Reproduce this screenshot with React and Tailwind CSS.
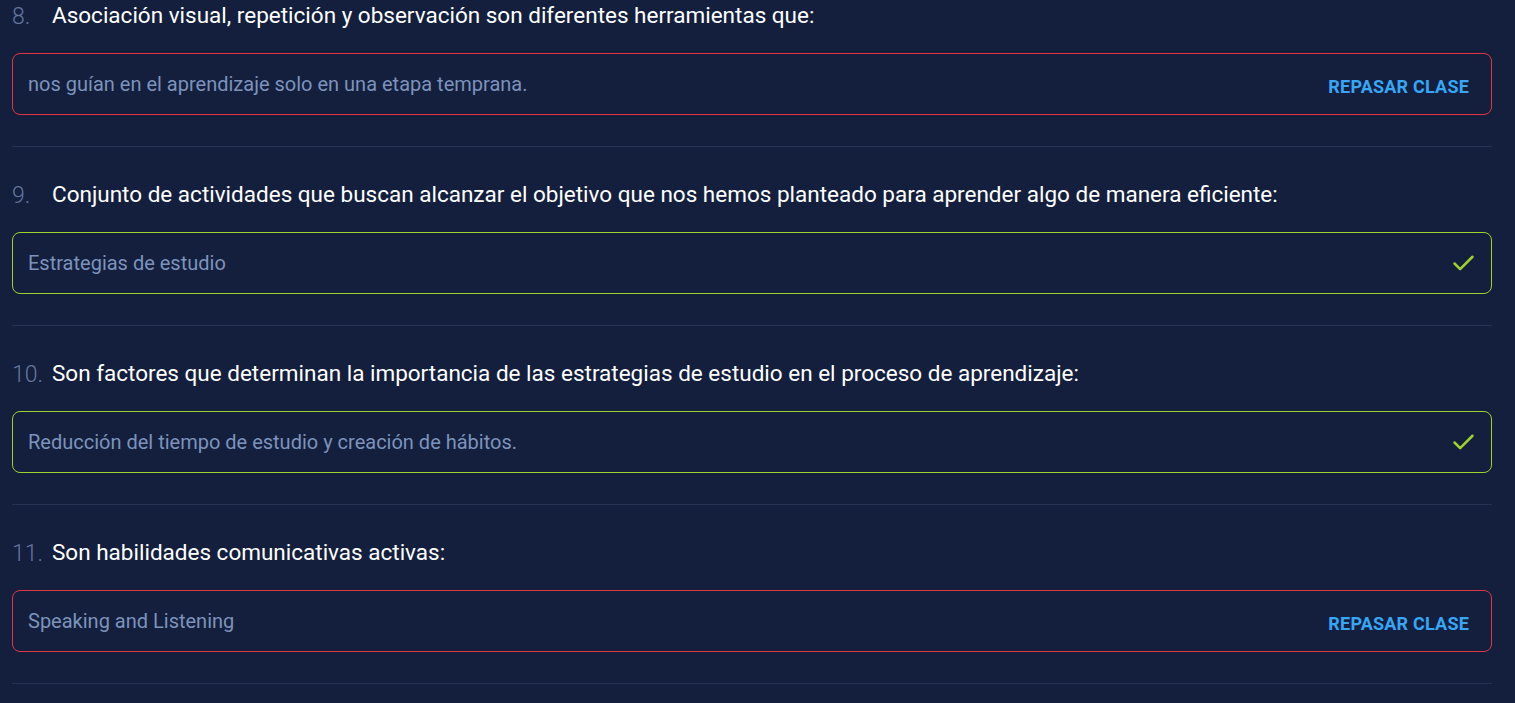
import { Check } from 'lucide-react'

const items = [
  {
    n: 8,
    q: 'Asociación visual, repetición y observación son diferentes herramientas que:',
    a: 'nos guían en el aprendizaje solo en una etapa temprana.',
    ok: false,
  },
  {
    n: 9,
    q: 'Conjunto de actividades que buscan alcanzar el objetivo que nos hemos planteado para aprender algo de manera eficiente:',
    a: 'Estrategias de estudio',
    ok: true,
  },
  {
    n: 10,
    q: 'Son factores que determinan la importancia de las estrategias de estudio en el proceso de aprendizaje:',
    a: 'Reducción del tiempo de estudio y creación de hábitos.',
    ok: true,
  },
  {
    n: 11,
    q: 'Son habilidades comunicativas activas:',
    a: 'Speaking and Listening',
    ok: false,
  },
]

export default function App() {
  return (
    <div className="min-h-screen bg-[#131f3d] font-['Roboto',sans-serif] pl-3 pr-[23px]">
      {items.map((item, i) => (
        <div
          key={item.n}
          className={`border-b border-[#243253] pb-[31px] ${i === 0 ? 'pt-0' : 'pt-[32px]'}`}
        >
          {/* Question */}
          <div className="flex items-center h-[32px]">
            <span className="w-[40px] shrink-0 text-[23px] font-light text-[#6476a0] mt-[3px]">{item.n}.</span>
            <span className="text-[22.5px] text-white">{item.q}</span>
          </div>

          {/* Answer */}
          <div
            className={`mt-[21px] h-[62px] rounded-lg border flex items-center justify-between pl-[15px] pr-[22px] ${
              item.ok ? 'border-[#9fd22d]' : 'border-[#e2353f]'
            }`}
          >
            <span className="text-[20px] text-[#7c93bc] -mt-[1px]">{item.a}</span>
            {item.ok ? (
              <Check size={27} strokeWidth={2.2} className="text-[#9fd22d] -mr-[8px]" />
            ) : (
              <span className="text-[18px] font-bold text-[#36a6f5] tracking-[0.2px] mt-[4px]">REPASAR CLASE</span>
            )}
          </div>
        </div>
      ))}
    </div>
  )
}
